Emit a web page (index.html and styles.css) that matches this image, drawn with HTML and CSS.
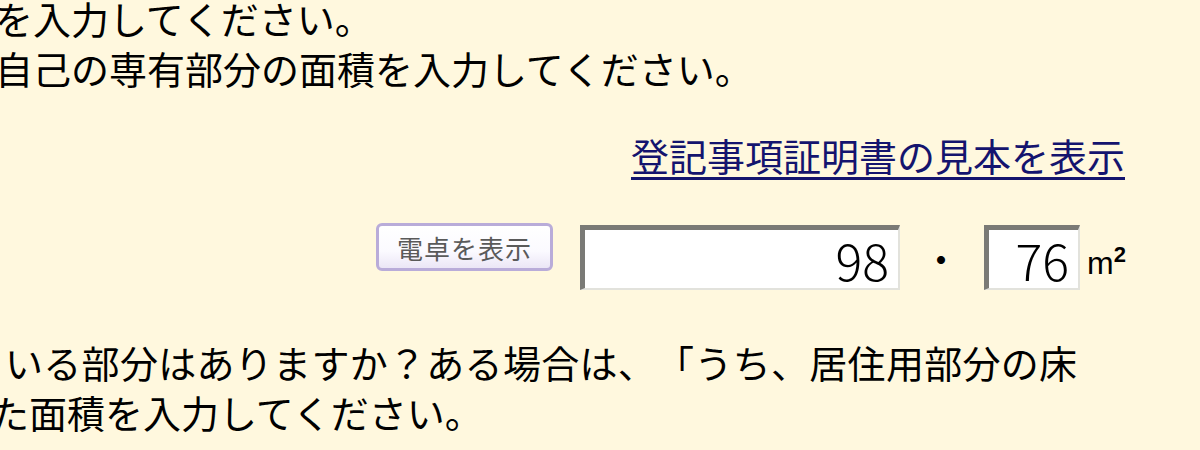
FILE: index.html
```html
<!doctype html>
<html lang="ja">
<head>
  <meta charset="utf-8">
  <title>床面積の入力</title>
  <link rel="stylesheet" href="styles.css">
</head>
<body class="page">
  <div class="note note-top">
    <p class="line line-a">を入力してください。</p>
    <p class="line line-a">自己の専有部分の面積を入力してください。</p>
  </div>

  <div class="sample-row">
    <a class="sample-link" href="#">登記事項証明書の見本を表示</a>
  </div>

  <div class="area-row">
    <button class="calc-button" type="button">電卓を表示</button>
    <input class="num-input num-int" type="text" value="98">
    <span class="dot">・</span>
    <input class="num-input num-dec" type="text" value="76">
    <span class="unit">m<sup>2</sup></span>
  </div>

  <div class="note note-bottom">
    <p class="line line-b">いる部分はありますか？ある場合は、「うち、居住用部分の床</p>
    <p class="line line-c">た面積を入力してください。</p>
  </div>
</body>
</html>
```

FILE: styles.css
```css
.page {
  margin: 0;
  width: 1200px;
  height: 450px;
  overflow: hidden;
  background-color: #fff8de;
  color: #000;
  font-family: "Noto Sans CJK JP", "Noto Sans", sans-serif;
  font-size: 38px;
  text-spacing-trim: space-all;
}

.note {
  line-height: 50px;
}

.note-top {
  margin-top: -7px;
}

.note-bottom {
  margin-top: 47px;
}

.line {
  margin: 0;
  white-space: nowrap;
}

.line-a {
  margin-left: -5px;
}

.line-b {
  margin-left: 5px;
  letter-spacing: 0.3px;
}

.line-c {
  margin-left: -9px;
}

.sample-row {
  display: flex;
  justify-content: flex-end;
  padding-right: 75px;
  margin-top: 37px;
  line-height: 50px;
}

.sample-link {
  color: #14146e;
  text-decoration: underline;
  text-decoration-thickness: 3px;
  text-underline-offset: 6px;
  white-space: nowrap;
}

.area-row {
  display: flex;
  align-items: flex-start;
  justify-content: flex-end;
  padding-right: 76px;
  margin-top: 43px;
  height: 67px;
}

.calc-button {
  width: 177px;
  height: 48px;
  margin-right: 27px;
  padding: 0;
  border: 3px solid #b9acd9;
  border-radius: 6px;
  background: linear-gradient(#ffffff 0%, #fbfaff 60%, #ebe6f6 100%);
  color: #5a5a5a;
  font-family: "Noto Sans CJK JP", sans-serif;
  font-size: 26px;
  letter-spacing: 1px;
}

.num-input {
  box-sizing: border-box;
  height: 65px;
  margin-top: 2px;
  padding: 0 9px 0 0;
  border-style: solid;
  border-width: 5px 2px 2px 5px;
  border-color: #7a7a76 #e2e2dc #e2e2dc #7a7a76;
  background: #fff;
  color: #000;
  text-align: right;
  font-family: "Noto Sans CJK JP", sans-serif;
  font-size: 50px;
  font-weight: 300;
  line-height: 1;
}

.num-int {
  width: 320px;
}

.num-dec {
  width: 96px;
}

.dot {
  width: 86px;
  margin-top: 10px;
  margin-left: -2px;
  text-align: center;
  font-size: 38px;
  line-height: 50px;
}

.unit {
  margin-left: 7px;
  margin-right: -2px;
  margin-top: 14px;
  font-family: "Liberation Sans", sans-serif;
  font-size: 32px;
  line-height: 36px;
}

.unit sup {
  font-size: 22px;
  font-weight: bold;
  vertical-align: 12px;
}
```
